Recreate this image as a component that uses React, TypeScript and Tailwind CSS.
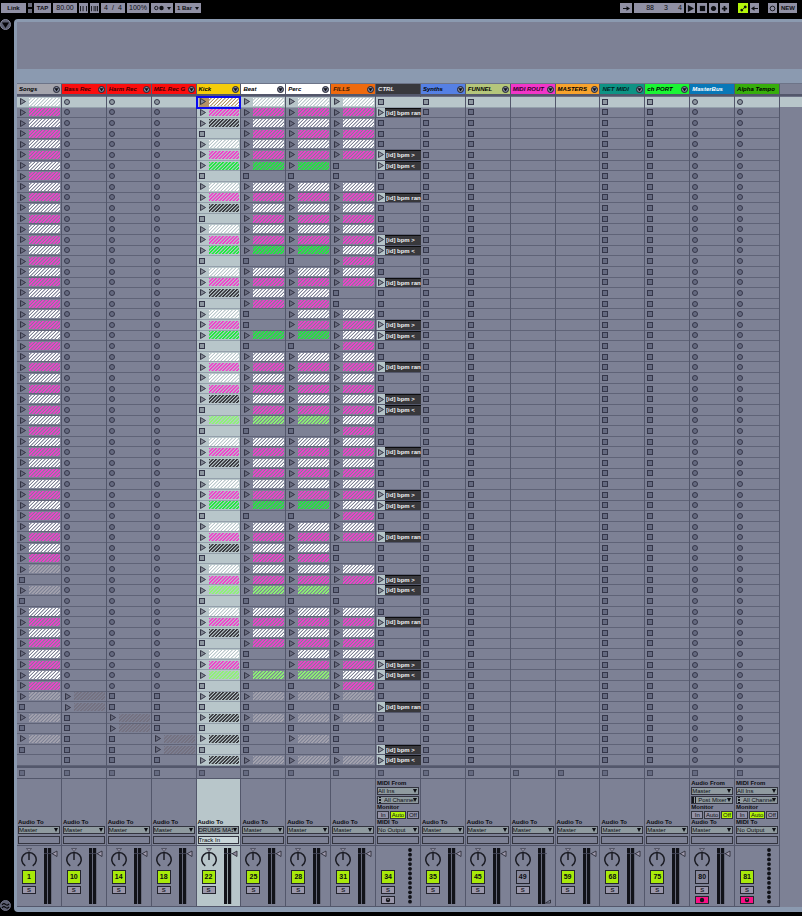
import type { ReactNode } from "react";

type Routing = {
  fromLabel: string;
  from: string;
  channel: string;
  monitor: "In" | "Auto" | "Off";
};

type Track = {
  name: string;
  head: string;
  slots: string;
  num: string;
  to?: "Audio To" | "MIDI To";
  dest?: string;
  routing?: Routing;
  midi?: boolean;
  menu?: boolean;
  off?: boolean;
  arm?: "idle" | "armed";
  cue?: boolean;
};

const ROWS = 63;
const STOPS = "s".repeat(ROWS);
const RECS = "o".repeat(ROWS);
const NONE = ".".repeat(ROWS);

/* One character per scene: W P K G L D X clips, s stop, o record, A B C tempo clips. */
const SONGS = "WP".repeat(22) + "DsDs" + "WPWPWPWP" + "DsDsDs.";
const BASS = "o".repeat(56) + "XXsssss";
const HARM = "o".repeat(56) + "ssXXsss";
const MEL = "o".repeat(56) + "ssssXXs";
const KICK =
  "WPKsWPGs" + "WPKsWPGs" + "WPKsWPGs" + "WPWPKsLs" + "WPKsWPGs" + "WPKsWPLs" + "WPKsWPLs" + "KsKsKsK";
const BEAT =
  "WPWPWPGs" + "WPWPWPGs" + "WPWPssGs" + "WPWPWPLs" + "WPWPWPGs" + "WPWPWPLs" + "WPWPssLs" + "DsDsssD";
const PERC =
  "WPWPWPGs" + "WPWPWPGs" + "WPWPWPGs" + "WPWPWPLs" + "WPWPWPGs" + "WPWPWPLs" + "WPWPWPLs" + "DsDsDsD";
const FILLS =
  "WPWPWPss" + "WPWPWPWP" + "WPssWPWP" + "WPWPWPWP" + "WPWPWPWP" + "WPssWPss" + "WPWPWPWP" + "DsDsssD";
const CTRL =
  "sAsssBCs" + "sAsssBCs" + "sAsssBCs" + "sAssBCss" + "sAsssBCs" + "sAsssBCs" + "sAsssBCs" + "sAsssBC";

const TRACKS: Track[] = [
  { name: "Songs", head: "bg-[#a5a5ad] text-black", slots: SONGS, num: "1", menu: true },
  { name: "Bass Rec", head: "bg-[#fb0d0d] text-[#3b0000]", slots: BASS, num: "10", menu: true },
  { name: "Harm Rec", head: "bg-[#fb0d0d] text-[#3b0000]", slots: HARM, num: "14", menu: true },
  { name: "MEL Rec G", head: "bg-[#fb0d0d] text-[#3b0000]", slots: MEL, num: "18", menu: true },
  { name: "Kick", head: "bg-[#f5cd0a] text-black", slots: KICK, num: "22", menu: true, dest: "DRUMS MASTER" },
  { name: "Beat", head: "bg-white text-black", slots: BEAT, num: "25", menu: true },
  { name: "Perc", head: "bg-white text-black", slots: PERC, num: "28", menu: true },
  { name: "FILLS", head: "bg-[#ee6a0e] text-[#3a1600]", slots: FILLS, num: "31", menu: true },
  {
    name: "CTRL",
    head: "bg-[#38383c] text-[#e4e4e8]",
    slots: CTRL,
    num: "34",
    to: "MIDI To",
    dest: "No Output",
    midi: true,
    arm: "idle",
    routing: { fromLabel: "MIDI From", from: "All Ins", channel: "All Channels", monitor: "Auto" },
  },
  { name: "Synths", head: "bg-[#5580e4] text-black", slots: STOPS, num: "35", menu: true },
  { name: "FUNNEL", head: "bg-[#b5c67b] text-black", slots: STOPS, num: "45", menu: true },
  { name: "MIDI ROUT", head: "bg-[#f235c8] text-[#2c0024]", slots: NONE, num: "49", menu: true, off: true, cue: true },
  { name: "MASTERS", head: "bg-[#f8a32c] text-black", slots: NONE, num: "59", menu: true },
  { name: "NET MIDI", head: "bg-[#0e9384] text-[#00231f]", slots: STOPS, num: "68", menu: true },
  { name: "ch PORT", head: "bg-[#1bf534] text-black", slots: STOPS, num: "75", menu: true },
  {
    name: "MasterBus",
    head: "bg-[#0878b8] text-white",
    slots: RECS,
    num: "80",
    off: true,
    arm: "armed",
    routing: { fromLabel: "Audio From", from: "Master", channel: "Post Mixer", monitor: "Off" },
  },
  {
    name: "Alpha Tempo",
    head: "bg-[#37ae0b] text-black",
    slots: RECS,
    num: "81",
    to: "MIDI To",
    dest: "No Output",
    midi: true,
    arm: "armed",
    routing: { fromLabel: "MIDI From", from: "All Ins", channel: "All Channels", monitor: "Auto" },
  },
];

const CLIP_COLOR: Record<string, string> = {
  W: "text-white",
  P: "text-[#f03fcb]",
  K: "text-[#38393d]",
  G: "text-[#1dec3c]",
  L: "text-[#8cf573]",
  D: "text-[#a3a2ae]",
  X: "text-[#747180]",
};

const TEMPO: Record<string, string> = { A: "[id] bpm ran", B: "[id] bpm >", C: "[id] bpm <" };

function PlayIcon({ className }: { className: string }) {
  return (
    <svg viewBox="0 0 6 7" className="block h-[7px] w-[6px]">
      <path d="M.5.5v6L5.5 3.5z" className={className} stroke="#2d2e3d" strokeWidth="0.9" />
    </svg>
  );
}

type SlotProps = { code: string; lit: boolean; active: boolean; track: string; scene: number };

function Slot({ code, lit, active, track, scene }: SlotProps) {
  const label = `${track} ${scene + 1}`;
  if (TEMPO[code]) {
    return (
      <div className="flex min-h-0 items-stretch border-b border-[#53576b] pl-px">
        <button aria-label={label} className="flex w-[8px] shrink-0 items-center justify-center bg-[#b5c4c8]">
          <PlayIcon className="fill-[#8d949c]" />
        </button>
        <span className="mr-[2px] min-w-0 flex-1 overflow-hidden whitespace-nowrap border-t border-[#0c0c0e] bg-[#38383c] pl-px text-[6px] font-bold leading-[8px] text-[#f1f1f3]">
          {TEMPO[code]}
        </span>
      </div>
    );
  }
  return (
    <div
      className={
        "flex min-h-0 items-center border-b pl-[2px] " +
        (active ? "relative z-10 outline-2 -outline-offset-1 outline-[#0a0af0] " : "") +
        (lit ? "border-[#94a0ab] bg-[#b8c6ca]" : "border-[#5f6377]")
      }
    >
      {code in CLIP_COLOR && (
        <>
          <button
            aria-label={label}
            className={"flex h-full w-[10px] shrink-0 items-center justify-start pl-px " + (active ? "bg-[#b29266]" : "")}
          >
            <PlayIcon className={lit ? "fill-[#858c96]" : "fill-[#6a6d80]"} />
          </button>
          <span
            className={
              "mr-px h-[8px] min-w-0 flex-1 bg-[repeating-linear-gradient(135deg,currentColor_0%,currentColor_9%,transparent_15%,transparent_19%,currentColor_25%)] bg-[length:7px_7px] " +
              (active ? "bg-[#b29266] " : "") +
              CLIP_COLOR[code]
            }
          />
        </>
      )}
      {code === "s" && (
        <button aria-label={label} className={"size-[6px] border border-[#35374a] " + (lit ? "bg-[#8d97a0]" : "bg-[#656a80]")} />
      )}
      {code === "o" && (
        <button aria-label={label} className={"size-[6px] rounded-full border border-[#35374a] " + (lit ? "bg-[#8d97a0]" : "bg-[#656a80]")} />
      )}
    </div>
  );
}

function Picker({ label, value, icon, lit }: { label: string; value: string; icon?: "bars" | "dots"; lit?: boolean }) {
  return (
    <div className={"relative flex h-[8px] shrink-0 items-center border border-[#33343f] " + (lit ? "bg-[#8c989d]" : "bg-[#8f9a9f]")}>
      {icon === "bars" && (
        <svg viewBox="0 0 4 6" className="h-[6px] w-[4px] shrink-0">
          <path d="M0 0h2v6H0zM3 0h1v6H3z" fill="#15161c" />
        </svg>
      )}
      {icon === "dots" && (
        <svg viewBox="0 0 4 6" className="h-[6px] w-[4px] shrink-0">
          <path d="M1 0h2v1H1zM1 2h2v2H1zM1 5h2v1H1z" fill="#15161c" />
        </svg>
      )}
      <select
        aria-label={label}
        className={
          "h-[6px] min-w-0 flex-1 appearance-none overflow-hidden bg-transparent text-[6px] leading-[6px] text-[#0c0d12] " +
          (icon ? "pl-[2px] pr-[4px]" : "pr-[5px]")
        }
      >
        <option>{value}</option>
      </select>
      <svg viewBox="0 0 4 4" className="pointer-events-none absolute right-px h-[4px] w-[4px]">
        <path d="M0 0h4L2 4z" fill="#0c0d12" />
      </svg>
    </div>
  );
}

function Caption({ children }: { children: ReactNode }) {
  return <div className="shrink-0 whitespace-nowrap text-[6px] font-bold leading-[7px] text-[#0c0d12]">{children}</div>;
}

function Io({ track, selected }: { track: Track; selected: boolean }) {
  const r = track.routing;
  return (
    <div className="flex h-[67px] flex-col justify-end border-b border-[#53576b] pb-px pl-px pr-px">
      {r && (
        <>
          <Caption>{r.fromLabel}</Caption>
          <div className="flex shrink-0 flex-col gap-px">
            <Picker label={`${track.name} input`} value={r.from} />
            <Picker label={`${track.name} input channel`} value={r.channel} icon={track.midi ? "dots" : "bars"} />
          </div>
          <Caption>Monitor</Caption>
          <div className="flex h-[8px] shrink-0 gap-px">
            {(["In", "Auto", "Off"] as const).map((m) => (
              <button
                key={m}
                className={
                  "border border-[#33343f] text-center text-[6px] leading-[6px] text-[#0c0d12] " +
                  (m === "Auto" ? "flex-[4] " : "flex-[3] ") +
                  (m === r.monitor ? "bg-[#b1f30b]" : "bg-[#9493a8]")
                }
              >
                {m}
              </button>
            ))}
          </div>
        </>
      )}
      <Caption>{track.to ?? "Audio To"}</Caption>
      <Picker label={`${track.name} output`} value={track.dest ?? "Master"} lit={selected} />
      <div
        className={
          "mt-[2px] h-[8px] shrink-0 overflow-hidden whitespace-nowrap border border-[#33343f] text-[6px] leading-[6px] text-[#0c0d12] " +
          (selected ? "bg-[#c9d6d9]" : "")
        }
      >
        {selected ? "Track In" : ""}
      </div>
    </div>
  );
}

function Mixer({ track, selected }: { track: Track; selected: boolean }) {
  return (
    <div className="flex h-[61px] border-b border-[#53576b] pl-[4px] pt-[2px]">
      <div className="flex w-[16px] flex-col items-center">
        <div className="h-[22px] shrink-0">
          {!track.midi && (
            <svg viewBox="0 0 16 20" className="block h-[20px] w-[16px]" fill="none">
              <path d="M5.5 .5h5L8 3.5z" fill={selected ? "#a59bb0" : "#928fa3"} stroke="#33343f" strokeWidth="0.6" />
              <path d="M4.3 17.8A7.2 7.2 0 1 1 11.7 17.8" stroke="#1b1c24" strokeWidth="1.5" />
              <path d="M8 4.5V12" stroke="#1b1c24" strokeWidth="1.5" />
            </svg>
          )}
        </div>
        <button
          className={
            "h-[14px] w-[14px] shrink-0 border border-[#23242e] text-center text-[7px] font-bold leading-[12px] text-[#0c0d12] " +
            (track.off ? "bg-[#86889c]" : "bg-[#a8ea0a]")
          }
        >
          {track.num}
        </button>
        <button className="mt-[2px] h-[8px] w-[14px] shrink-0 border border-[#23242e] bg-[#9a97ab] text-center text-[6px] font-bold leading-[6px] text-[#23242e]">
          S
        </button>
        {track.arm && (
          <button
            aria-label={`Arm ${track.name}`}
            className={
              "mt-[2px] flex h-[8px] w-[14px] shrink-0 items-center justify-center border border-[#23242e] " +
              (track.arm === "armed" ? "bg-[#fb0f85]" : "bg-[#9a97ab]")
            }
          >
            <svg viewBox="0 0 6 6" className="h-[6px] w-[6px]">
              <circle cx="3" cy="3" r="2.2" fill="#15161c" />
              {track.midi && <path d="M3 1.5v1.5" stroke="#c9c6d6" strokeWidth="0.9" />}
            </svg>
          </button>
        )}
      </div>
      {track.midi ? (
        <svg viewBox="0 0 6 56" className="ml-[11px] block h-[56px] w-[6px]">
          {Array.from({ length: 12 }, (_, i) => (
            <circle key={i} cx="3" cy={2 + i * 4.7} r="1.9" fill="#111218" />
          ))}
        </svg>
      ) : (
        <svg viewBox="0 0 16 56" className="ml-[7px] block h-[56px] w-[16px]">
          <path d="M0 0h3.2v56H0zM4 0h3.2v56H4z" fill="#111218" />
          <path d="M0 5.5h9" stroke="#45475a" strokeWidth="0.8" />
          {track.cue ? (
            <path d="M7.5 55l5-3v3z" fill="none" stroke="#23242e" strokeWidth="0.8" />
          ) : (
            <path d="M13 3v5.5L8.2 5.7z" fill={selected ? "#8f899b" : "#a09aae"} stroke="#23242e" strokeWidth="0.8" />
          )}
        </svg>
      )}
    </div>
  );
}

function TrackColumn({ track, selected }: { track: Track; selected: boolean }) {
  return (
    <section className={"flex min-w-0 flex-col border-r border-[#53576b] " + (selected ? "bg-[#b8c6ca]" : "")}>
      <h2 className={"flex h-[10px] items-center pl-[2px] pr-px text-[6px] font-bold italic leading-[10px] " + track.head}>
        <span className="min-w-0 flex-1 whitespace-nowrap">{track.name}</span>
        {track.menu && (
          <svg viewBox="0 0 7 7" className="h-[7px] w-[7px] shrink-0">
            <circle cx="3.5" cy="3.5" r="3" fill="#858aa0" stroke="#20222f" />
            <path d="M1.5 2.2h4L3.5 5.5z" fill="#0c0d12" />
          </svg>
        )}
      </h2>
      <div className="h-[3px] border-b border-[#6b7084] bg-[#53576b]" />
      <div className="grid h-[669px] grid-rows-[repeat(63,minmax(0,1fr))]">
        {track.slots.split("").map((code, i) => (
          <Slot key={i} code={code} lit={selected || i === 0} active={selected && i === 0} track={track.name} scene={i} />
        ))}
      </div>
      <div className="h-[2px] bg-[#53576b]" />
      <div className="flex h-[11px] items-center border-b border-[#53576b] bg-[#7d8195] pl-[2px]">
        <button aria-label={`Stop ${track.name}`} className="size-[6px] border border-[#45485b] bg-[#656a80]" />
      </div>
      <Io track={track} selected={selected} />
      <Mixer track={track} selected={selected} />
    </section>
  );
}

function Key({ children, className = "", label }: { children: ReactNode; className?: string; label?: string }) {
  return (
    <button
      aria-label={label}
      className={
        "flex h-[10px] shrink-0 items-center justify-center whitespace-nowrap bg-[#9090a4] leading-[10px] text-[#0c0d12] " +
        className
      }
    >
      {children}
    </button>
  );
}

function Glyph({ d }: { d: string }) {
  return (
    <svg viewBox="0 0 8 8" className="h-[7px] w-[7px]">
      <path d={d} fill="#0c0d12" />
    </svg>
  );
}

function Caret() {
  return (
    <svg viewBox="0 0 4 3" className="ml-[3px] h-[3px] w-[4px]">
      <path d="M0 0h4L2 3z" fill="#0c0d12" />
    </svg>
  );
}

function Transport() {
  return (
    <header className="flex h-[19px] items-start justify-between pl-px pr-[5px] pt-[3px]">
      <div className="flex items-center gap-[2px]">
        <Key className="w-[25px] text-[6px] font-bold">Link</Key>
        <div className="flex w-[4px] flex-col gap-[2px]">
          <i className="h-[4px] bg-[#6a6b7c]" />
          <i className="h-[4px] bg-[#6a6b7c]" />
        </div>
        <Key className="w-[17px] text-[6px] font-bold">TAP</Key>
        <Key className="w-[24px] text-[7px]">80.00</Key>
        <Key label="Nudge down" className="w-[9px]">
          <Glyph d="M0 1h1v6H0zM3 1h1v6H3zM7 1h1v6H7z" />
        </Key>
        <Key label="Nudge up" className="w-[9px]">
          <Glyph d="M0 1h1v6H0zM3 1h1v6H3zM5 1h1v6H5zM7 1h1v6H7z" />
        </Key>
        <Key className="w-[24px] gap-[4px] text-[7px]">
          <span>4</span>
          <span>/</span>
          <span>4</span>
        </Key>
        <Key className="w-[22px] text-[7px]">100%</Key>
        <Key label="Metronome" className="w-[22px]">
          <svg viewBox="0 0 10 6" className="h-[6px] w-[10px]">
            <circle cx="2.3" cy="3" r="1.7" fill="none" stroke="#0c0d12" strokeWidth="0.9" />
            <circle cx="7.5" cy="3" r="2.2" fill="#0c0d12" />
          </svg>
          <Caret />
        </Key>
        <Key className="w-[26px] text-[6px] font-bold">
          <span>1 Bar</span>
          <Caret />
        </Key>
      </div>
      <div className="flex items-center gap-[2px]">
        <Key label="Follow" className="w-[12px]">
          <Glyph d="M0 3.5h4V1.5L8 4 4 6.5v-2H0z" />
        </Key>
        <div className="flex h-[10px] w-[50px] items-center justify-end bg-[#9090a4] pr-[2px] text-[7px] leading-[10px] text-[#0c0d12]">
          <span className="w-[14px] text-right">88</span>
          <span className="w-[14px] text-right">3</span>
          <span className="w-[14px] text-right">4</span>
        </div>
        <Key label="Play" className="w-[9px]">
          <Glyph d="M1 0v8l7-4z" />
        </Key>
        <Key label="Stop" className="w-[10px]">
          <Glyph d="M1 1h6v6H1z" />
        </Key>
        <Key label="Record" className="w-[9px]">
          <Glyph d="M4 1a3 3 0 1 0 .01 0z" />
        </Key>
        <Key label="Overdub" className="w-[9px]">
          <Glyph d="M3 1h2v2h2v2H5v2H3V5H1V3h2z" />
        </Key>
        <button aria-label="Automation arm" className="ml-[7px] flex h-[10px] w-[10px] items-center justify-center bg-[#b4f50a]">
          <Glyph d="M2 4.2a1.6 1.6 0 1 0 .01 0zM6 .6a1.6 1.6 0 1 0 .01 0zM3.2 4.300l1.200-1.200.6.6-1.200 1.200z" />
        </button>
        <Key label="Re-enable automation" className="w-[9px]">
          <Glyph d="M8 3.5H4V1.5L0 4l4 2.5v-2h4z" />
        </Key>
        <Key label="Session record" className="ml-[7px] w-[9px]">
          <svg viewBox="0 0 8 8" className="h-[7px] w-[7px]">
            <circle cx="4" cy="4" r="2.7" fill="none" stroke="#0c0d12" />
          </svg>
        </Key>
        <Key className="w-[18px] text-[6px] font-bold">NEW</Key>
      </div>
    </header>
  );
}

export default function App() {
  return (
    <div className="flex flex-col overflow-hidden bg-black pb-[5px] font-['Liberation_Sans',Arial,sans-serif]">
      <Transport />
      <main className="flex">
        <aside className="flex w-[14px] shrink-0 flex-col items-start justify-between">
          <button aria-label="Show browser">
            <svg viewBox="0 0 12 12" className="block h-[12px] w-[12px]">
              <circle cx="5.5" cy="5.5" r="5" fill="#5d6072" stroke="#85889c" />
              <path d="M2 3.5h7l-3.5 5.5z" fill="#050508" />
            </svg>
          </button>
          <button aria-label="Show groove pool">
            <svg viewBox="0 0 12 12" className="block h-[12px] w-[12px]">
              <circle cx="5.5" cy="5.5" r="5" fill="#5d6072" stroke="#6d7084" />
              <path d="M2 4.8q1.7-2 3.5-.4t3.5-.6M2 7.8q1.7-2 3.5-.4t3.5-.6" fill="none" stroke="#050508" strokeWidth="1.2" />
            </svg>
          </button>
        </aside>
        <div className="min-w-0 flex-1 rounded-l-[4px] bg-[#8b9ab0] pb-[5px] pl-[3px] pt-[3px]">
          <div className="h-[47px] bg-[#7d8195]" />
          <div className="h-[14px]" />
          <div className="grid grid-cols-[repeat(17,minmax(0,1fr))_22px] border-t border-[#6d7488] bg-[#7d8195]">
            {TRACKS.map((t) => (
              <TrackColumn key={t.name} track={t} selected={t.name === "Kick"} />
            ))}
            <div className="flex flex-col">
              <div className="h-[10px]" />
              <div className="h-[3px] border-b border-[#6b7084] bg-[#53576b]" />
              <div className="h-[10px] bg-[#b8c6ca]" />
            </div>
          </div>
        </div>
      </main>
    </div>
  );
}
